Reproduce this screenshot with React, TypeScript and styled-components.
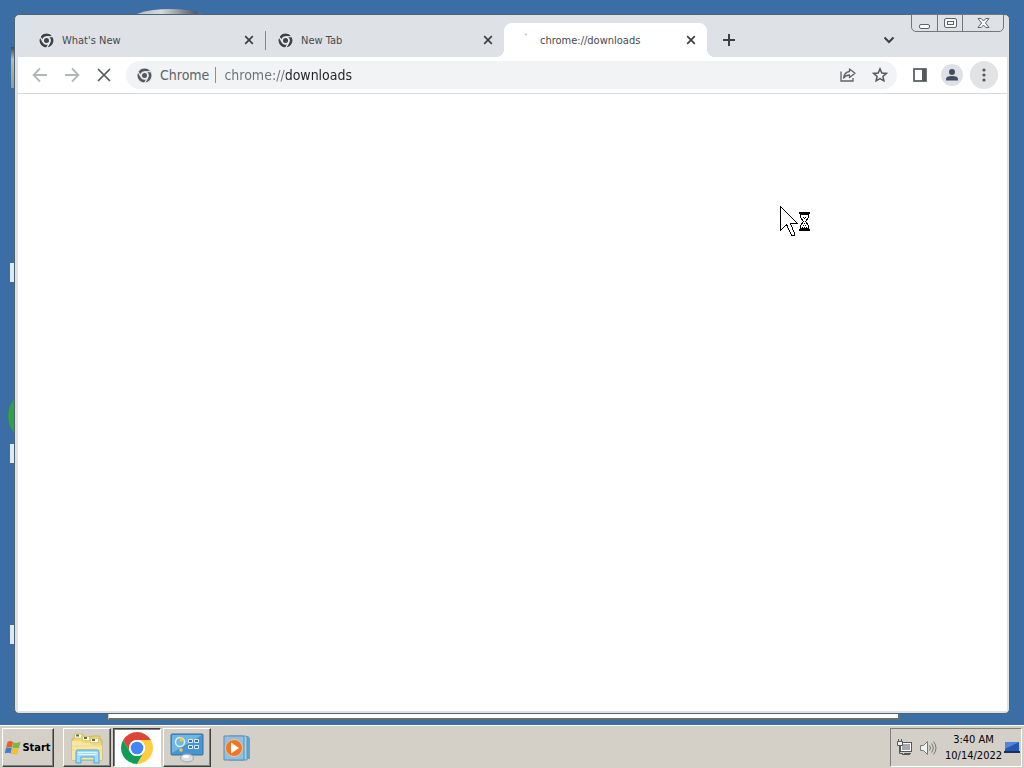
import React from 'react';
import styled, { createGlobalStyle, css } from 'styled-components';

const UI = '"DejaVu Sans Condensed", "Open Sans", "Noto Sans", sans-serif';

const GlobalStyle = createGlobalStyle`
  *, *::before, *::after { box-sizing: border-box; }
  body { margin: 0; background: #3a6ea5; font-family: "Noto Sans", sans-serif; }
  button { font: inherit; border: 0; margin: 0; padding: 0; background: none; color: inherit; cursor: default; }
  svg { display: block; flex: none; }
`;

const Screen = styled.div`
  display: flex;
  flex-direction: column;
  min-height: 100vh;
  overflow: hidden;
`;

const Desktop = styled.main`
  position: relative;
  flex: 1;
  display: flex;
  padding: 14px 14px 11px;
  background: #3a6ea5;
`;

/* Desktop items that stick out from behind the browser window */
const Peek = styled.div<{ $x: number; $y: number; $w: number; $h: number; $bg: string; $round?: boolean }>`
  position: absolute;
  left: ${p => p.$x}px;
  top: ${p => p.$y}px;
  width: ${p => p.$w}px;
  height: ${p => p.$h}px;
  background: ${p => p.$bg};
  border-radius: ${p => (p.$round ? '50%' : '0')};
`;

const BackWindow = styled.div`
  position: absolute;
  left: 108px;
  right: 124px;
  bottom: 5px;
  height: 40px;
  background: #fff;
  border: 1px solid #d4d0c8;
  border-right: 2px solid #6c6c66;
  border-bottom: 2px solid #6c6c66;
`;

const Window = styled.section`
  position: relative;
  flex: 1;
  display: flex;
  flex-direction: column;
  min-width: 0;
  background: #dee1e6;
  border: 1px solid #4d6472;
  border-radius: 5px;
  padding: 0 2px 2px 3px;
`;

const TabStrip = styled.header`
  display: flex;
  align-items: flex-start;
  height: 42px;
  padding: 8px 3px 0 8px;
`;

const Tab = styled.div<{ $active?: boolean; $divided?: boolean }>`
  position: relative;
  display: flex;
  align-items: center;
  flex: 0 1 ${p => (p.$active ? 203 : 239)}px;
  height: 34px;
  padding: 0 11px 0 13px;
  gap: 8px;
  color: #45494e;
  ${p => p.$divided && css`
    &::after {
      content: '';
      position: absolute;
      right: -1px;
      top: 8px;
      height: 19px;
      width: 1px;
      background: #85898f;
    }
  `}
  ${p => p.$active && css`
    background: #fff;
    border-radius: 8px 8px 0 0;
    &::before, &::after {
      content: '';
      position: absolute;
      bottom: 0;
      width: 8px;
      height: 8px;
    }
    &::before { left: -8px; background: radial-gradient(circle at 0 0, transparent 8px, #fff 8px); }
    &::after { right: -8px; background: radial-gradient(circle at 100% 0, transparent 8px, #fff 8px); }
  `}
`;

const TabTitle = styled.span`
  flex: 1;
  padding-top: 2px;
  font: 11px/16px ${UI};
  white-space: nowrap;
  overflow: hidden;
`;

const IconButton = styled.button<{ $size?: number; $bg?: string }>`
  display: flex;
  align-items: center;
  justify-content: center;
  flex: none;
  width: ${p => p.$size ?? 28}px;
  height: ${p => p.$size ?? 28}px;
  border-radius: 50%;
  background: ${p => p.$bg ?? 'transparent'};
`;

const NewTab = styled(IconButton)`
  margin: 3px 0 0 8px;
`;

const TabSearch = styled(IconButton)`
  margin: 3px 8px 0 auto;
`;

const Profile = styled(IconButton)`
  margin: 0 3px;
`;

const Caption = styled.div`
  display: flex;
  margin-top: -9px;
  height: 18px;
  border: 1px solid #73777c;
  border-radius: 0 0 5px 5px;
`;

const CaptionButton = styled.button<{ $wide?: boolean }>`
  display: flex;
  align-items: center;
  justify-content: center;
  width: ${p => (p.$wide ? 41 : 25)}px;
  & + & { border-left: 1px solid #73777c; }
`;

const Toolbar = styled.nav`
  display: flex;
  align-items: center;
  gap: 4px;
  height: 37px;
  padding: 0 9px 0 8px;
  background: #fff;
  border-bottom: 1px solid #d5d9dd;
`;

const Omnibox = styled.form`
  flex: 1;
  display: flex;
  align-items: center;
  height: 28px;
  margin: 0 5px 0 4px;
  padding: 0 3px 0 11px;
  border-radius: 14px;
  background: #f1f3f4;
  font: 14px/20px ${UI};
  color: #5f6368;
`;

const OmniScheme = styled.span`
  margin-left: 8px;
  padding-right: 6px;
  border-right: 1px solid #8b8f94;
  line-height: 16px;
`;

/* The scheme is greyed and the host is dark */
const Address = styled.input`
  flex: 1;
  min-width: 0;
  margin: 0 0 0 8px;
  padding: 0;
  border: 0;
  outline: 0;
  font: inherit;
  color: transparent;
  background: linear-gradient(90deg, #6b6f74 62px, #202124 62px);
  -webkit-background-clip: text;
  background-clip: text;
`;

const OmniActions = styled.div`
  display: flex;
  gap: 4px;
`;

const Page = styled.article`
  flex: 1;
  background: #fff;
`;

const Pointer = styled.div`
  position: absolute;
  left: 780px;
  top: 206px;
`;

const Taskbar = styled.footer`
  display: flex;
  align-items: center;
  height: 43px;
  padding: 1px 2px 0;
  background: #d4d0c8;
  border-top: 1px solid #fff;
  box-shadow: 0 -1px 0 #d4d0c8;
  font: 11px/16px ${UI};
  color: #000;
`;

const TaskButton = styled.button<{ $pressed?: boolean; $flat?: boolean }>`
  display: flex;
  align-items: center;
  justify-content: center;
  width: 48px;
  height: 39px;
  margin-right: 2px;
  ${p => !p.$flat && css`
    border: 1px solid;
    border-color: ${p.$pressed ? '#404040 #fff #fff #404040' : '#fff #404040 #404040 #fff'};
    box-shadow: ${p.$pressed ? 'inset 1px 1px 0 #808080' : 'inset -1px -1px 0 #808080'};
    background: ${p.$pressed ? '#fff' : '#d4d0c8'};
  `}
`;

const StartButton = styled(TaskButton)`
  width: 52px;
  margin-right: 9px;
  gap: 1px;
  font-weight: bold;
`;

const Tray = styled.div`
  display: flex;
  align-items: center;
  gap: 6px;
  width: 132px;
  height: 39px;
  margin-left: auto;
  padding-left: 5px;
  border: 1px solid;
  border-color: #808080 #fff #fff #808080;
`;

const Clock = styled.time`
  flex: 1;
  padding-top: 1px;
  text-align: center;
  white-space: nowrap;
`;

const ShowDesktop = styled.button`
  width: 17px;
  margin-left: -6px;
`;

const ChromeLogo = ({ size, color }: { size: number; color?: string }) => {
  const line = color ? { stroke: '#e8eaed', strokeWidth: 3.5 } : {};
  return (
    <svg width={size} height={size} viewBox="0 0 48 48" aria-hidden="true">
      <path fill={color ?? '#db4437'} {...line} d="M24 12H44.78A24 24 0 0 0 3.22 12L13.61 30A12 12 0 0 1 24 12Z" />
      <path fill={color ?? '#ffcd40'} {...line} d="M34.39 30L24 48A24 24 0 0 0 44.78 12H24A12 12 0 0 1 34.39 30Z" />
      <path fill={color ?? '#0f9d58'} {...line} d="M13.61 30L3.22 12A24 24 0 0 0 24 48L34.39 30A12 12 0 0 1 13.61 30Z" />
      <circle cx="24" cy="24" r="12" fill={color ? '#e8eaed' : '#fff'} />
      <circle cx="24" cy="24" r={color ? 8 : 9.5} fill={color ?? '#4285f4'} />
    </svg>
  );
};

const CloseIcon = () => (
  <svg width="10" height="10" viewBox="0 0 10 10" stroke="#3c4043" strokeWidth="1.7">
    <path d="M1.2 1.2l7.6 7.6M8.8 1.2L1.2 8.8" />
  </svg>
);

const ArrowIcon = ({ forward }: { forward?: boolean }) => (
  <svg width="16" height="16" viewBox="0 0 16 16" fill="none" stroke="#b4b7ba" strokeWidth="1.8">
    <path d={forward ? 'M1 8h13M8 1.5L14.5 8 8 14.5' : 'M15 8H2M8 1.5L1.5 8 8 14.5'} />
  </svg>
);

const BrowserTab = ({ title, active, divided }: { title: string; active?: boolean; divided?: boolean }) => (
  <Tab $active={active} $divided={divided}>
    {active ? (
      <svg width="15" height="15" viewBox="0 0 15 15"><path d="M7 .8h2.500l.5 2z" fill="#a0a7b3" /></svg>
    ) : (
      <ChromeLogo size={15} color="#3f4347" />
    )}
    <TabTitle>{title}</TabTitle>
    <IconButton $size={10} aria-label={`Close ${title}`}><CloseIcon /></IconButton>
  </Tab>
);

const StartFlag = () => (
  <svg width="16" height="16" viewBox="0 0 16 16">
    <path d="M2.5 2Q5 .3 8 1.900L6.900 7.500Q4 6.300 1 7.900z" fill="#e5602b" />
    <path d="M8.400 2.200Q11.500 3.800 15.500 1.800L14.100 7.700Q11 9 7.400 7.700z" fill="#80b740" />
    <path d="M.9 8.300Q4 6.800 6.800 8L5.600 13.400Q3 12.100-.3 13.700z" fill="#3c7fc9" />
    <path d="M7.300 8.200Q10.500 9.500 13.900 8.200L12.600 14Q9.500 15.300 6.100 13.800z" fill="#f7bd35" />
  </svg>
);

const FoldersIcon = () => (
  <svg width="34" height="32" viewBox="0 0 34 32">
    <path d="M2 28V7h2V2.500h9L15 5h6l1-1h8v4h2v20z" fill="#efd67a" stroke="#cdb45e" />
    <path d="M4.500 2h7v4h-7zM12.500 4.500h7v4h-7zM20.500 6.500h8v4h-8z" fill="#fffbe2" stroke="#c9b263" strokeWidth=".6" />
    <path d="M6 3.500h3M14 6h3M22 8h3" stroke="#54763b" strokeWidth="2" />
    <path d="M2 9h9l2 2h7l2 2h10v15H2z" fill="#f8e7a0" />
    <path d="M2 14h30M2 18h30" stroke="#eed88a" />
    <path d="M6 31V20q0-2 2-2h19q2 0 2 2v11h-5v-6H11v6z" fill="#a4dbf5" stroke="#4ba5d6" />
    <path d="M8 20.500h19M8 22.500h19" stroke="#def5ff" />
    <path d="M12 28h11" stroke="#6cbce4" />
  </svg>
);

const ControlPanelIcon = () => (
  <svg width="34" height="30" viewBox="0 0 34 30">
    <rect x="1" y="1" width="32" height="21" rx="1" fill="#4796cf" stroke="#2c6fa8" />
    <path d="M2 2h30L2 20z" fill="#70b6e3" />
    <circle cx="10" cy="9" r="4.500" fill="none" stroke="#d8eefb" strokeWidth="1.500" />
    <path d="M10 9V4a5 5 0 0 1 4 3z" fill="#f5c848" />
    <circle cx="11" cy="17" r="1.800" fill="#f5c848" />
    <path d="M18.500 6.500h4v3h-4zM24.500 6.500h4v3h-4zM18.500 12.500h4v3h-4zM24.500 12.500h4v3h-4z" fill="#2e79b5" stroke="#d8eefb" />
    <ellipse cx="17" cy="25" rx="6.500" ry="4" fill="#d9dee2" stroke="#9ba6ae" />
    <ellipse cx="16" cy="23.500" rx="3" ry="1.500" fill="#fff" />
  </svg>
);

const MediaIcon = () => (
  <svg width="28" height="26" viewBox="0 0 28 26">
    <path d="M8 1h17l2 2v21H8z" fill="#5ea3cd" />
    <path d="M6 1h17l1 1v23H6z" fill="#a8d1e9" stroke="#5795bd" />
    <path d="M1 1h19l1 1v23H1z" fill="#8fc2e2" stroke="#568fb5" />
    <circle cx="11" cy="13" r="8.500" fill="#ee7627" stroke="#fac497" />
    <path d="M8 7.500v11l8-5.500z" fill="#fff" />
  </svg>
);

const NetworkIcon = () => (
  <svg width="17" height="17" viewBox="0 0 17 17" fill="none" stroke="#55585b">
    <rect x="4.500" y="3.500" width="11" height="9" fill="#fff" />
    <path d="M6 5h8v6H6z" fill="#a6aaac" stroke="none" />
    <path d="M8 14.500h7M6 15.500h8" />
    <path d="M1.500 2.500h5v4h-5z" fill="#f2f2f2" />
    <path d="M2.500 0v2M5.500 0v2M3.500 7v7.500H7" />
  </svg>
);

const SoundIcon = () => (
  <svg width="18" height="16" viewBox="0 0 18 16" fill="none" stroke="#74777a">
    <path d="M1.500 5.500h3l4-4v13l-4-4h-3z" fill="#f1f1f1" />
    <path d="M10.500 5.500q2 2.500 0 5M12.500 3.500q3.500 4.500 0 9M14.500 1.500q5 6.500 0 13" />
  </svg>
);

export default function App() {
  return (
    <Screen>
      <GlobalStyle />
      <Desktop>
        <Peek $x={127} $y={9} $w={86} $h={28} $bg="linear-gradient(90deg, #aeb4ba 0%, #d6d9dc 40%, #565968 80%, #a9adb3 100%)" $round />
        <Peek $x={11} $y={47} $w={8} $h={41} $bg="linear-gradient(#39474f, #b3bcb5 30%, #909c96)" />
        <Peek $x={10} $y={263} $w={10} $h={19} $bg="#dceaf5" />
        <Peek $x={8} $y={390} $w={50} $h={52} $bg="#33a045" $round />
        <Peek $x={10} $y={444} $w={10} $h={19} $bg="#dceaf5" />
        <Peek $x={10} $y={625} $w={10} $h={19} $bg="#dce6f5" />
        <BackWindow />

        <Window aria-label="Chrome">
          <TabStrip>
            <BrowserTab title="What's New" divided />
            <BrowserTab title="New Tab" />
            <BrowserTab title="chrome://downloads" active />
            <NewTab aria-label="New tab">
              <svg width="12" height="12" viewBox="0 0 12 12" stroke="#3c4043" strokeWidth="2"><path d="M6 0v12M0 6h12" /></svg>
            </NewTab>
            <TabSearch aria-label="Search tabs">
              <svg width="12" height="8" viewBox="0 0 12 8" fill="none" stroke="#3c4043" strokeWidth="2"><path d="M1.500 1.500L6 6l4.500-4.500" /></svg>
            </TabSearch>
            <Caption>
              <CaptionButton aria-label="Minimize">
                <svg width="13" height="12" viewBox="0 0 13 12"><rect x="1.500" y="7.500" width="10" height="4" rx="1.500" fill="#fff" stroke="#5f646a" /></svg>
              </CaptionButton>
              <CaptionButton aria-label="Maximize">
                <svg width="13" height="11" viewBox="0 0 13 11" fill="#f7f7f7" stroke="#5f646a"><rect x=".5" y=".5" width="12" height="9" rx="1.500" /><rect x="3.500" y="3.500" width="6" height="3" /></svg>
              </CaptionButton>
              <CaptionButton $wide aria-label="Close">
                <svg width="13" height="12" viewBox="0 0 13 12"><path d="M1 1.500h3.200L6.500 4l2.300-2.500H12L8.400 6l3.600 4.500H8.800L6.500 8l-2.300 2.500H1L4.600 6z" fill="#fff" stroke="#5f646a" /></svg>
              </CaptionButton>
            </Caption>
          </TabStrip>

          <Toolbar>
            <IconButton aria-label="Back"><ArrowIcon /></IconButton>
            <IconButton aria-label="Forward"><ArrowIcon forward /></IconButton>
            <IconButton aria-label="Stop">
              <svg width="14" height="14" viewBox="0 0 14 14" stroke="#54585c" strokeWidth="1.700"><path d="M1 1l12 12M13 1L1 13" /></svg>
            </IconButton>
            <Omnibox onSubmit={e => e.preventDefault()}>
              <ChromeLogo size={15} color="#55595e" />
              <OmniScheme>Chrome</OmniScheme>
              <Address aria-label="Address" defaultValue="chrome://downloads" spellCheck={false} />
              <OmniActions>
                <IconButton type="button" aria-label="Share">
                  <svg width="16" height="14" viewBox="0 0 16 14" fill="none" stroke="#5f6368" strokeWidth="1.300">
                    <path d="M1 3.500V13h12v-3" />
                    <path d="M9.500 1L15 5.300 9.500 9.500V7Q6 7 3.500 10 4.500 4 9.500 3.500z" strokeLinejoin="round" />
                  </svg>
                </IconButton>
                <IconButton type="button" aria-label="Bookmark this tab">
                  <svg width="16" height="16" viewBox="0 0 16 16" fill="none" stroke="#54585c" strokeWidth="1.500"><path d="M8 1.800l1.800 4.200 4.500.4-3.400 3 1 4.400L8 11.500l-3.900 2.300 1-4.400-3.400-3 4.500-.4z" /></svg>
                </IconButton>
              </OmniActions>
            </Omnibox>
            <IconButton aria-label="Side panel">
              <svg width="14" height="14" viewBox="0 0 14 14"><rect x="1" y="1" width="12" height="12" fill="#fff" stroke="#54585c" strokeWidth="1.700" /><path d="M9 1h4v12H9z" fill="#54585c" /></svg>
            </IconButton>
            <Profile aria-label="Profile" $size={22} $bg="#dde0e5">
              <svg width="14" height="14" viewBox="0 0 14 14" fill="#434d5f"><circle cx="7" cy="4" r="3" /><path d="M1 12.500V11q0-3 6-3t6 3v1.500z" /></svg>
            </Profile>
            <IconButton aria-label="Menu" $bg="#e2e3e5">
              <svg width="4" height="14" viewBox="0 0 4 14" fill="#54585c"><circle cx="2" cy="2" r="1.600" /><circle cx="2" cy="7" r="1.600" /><circle cx="2" cy="12" r="1.600" /></svg>
            </IconButton>
          </Toolbar>
          <Page />
        </Window>

        <Pointer>
          <svg width="32" height="32" viewBox="0 0 32 32" fill="#fff" stroke="#000" shapeRendering="crispEdges">
            <path d="M.5.500V24.500L6.500 18.500L11.500 29H14.500V27.500L10.500 17.500H17.500Z" />
            <path d="M20.500 8.500V11.500L23.500 15.500L20.500 19.500V22.500H28.500V19.500L25.500 15.500L28.500 11.500V8.500Z" />
            <path d="M19 7h11M19 24h11" strokeWidth="2" />
            <path d="M23 11.500h1M25 11.500h1M24 12.500h1M24 17.500h1M23 19.500h1M25 19.500h1M22 21.500h1M24 21.500h1M26 21.500h1" />
          </svg>
        </Pointer>
      </Desktop>

      <Taskbar>
        <StartButton><StartFlag />Start</StartButton>
        <TaskButton aria-label="Windows Explorer"><FoldersIcon /></TaskButton>
        <TaskButton $pressed aria-label="Google Chrome"><ChromeLogo size={32} /></TaskButton>
        <TaskButton aria-label="Control Panel"><ControlPanelIcon /></TaskButton>
        <TaskButton $flat aria-label="Media Player"><MediaIcon /></TaskButton>
        <Tray>
          <NetworkIcon />
          <SoundIcon />
          <Clock>3:40 AM<br />10/14/2022</Clock>
          <ShowDesktop aria-label="Show desktop">
            <svg width="16" height="14" viewBox="0 0 16 14"><path d="M1 1h14v9H1z" fill="#2457b8" /><path d="M1 1h14L1 8z" fill="#4f86dc" /><path d="M0 10h16v2H0z" fill="#1b2f57" /></svg>
          </ShowDesktop>
        </Tray>
      </Taskbar>
    </Screen>
  );
}
